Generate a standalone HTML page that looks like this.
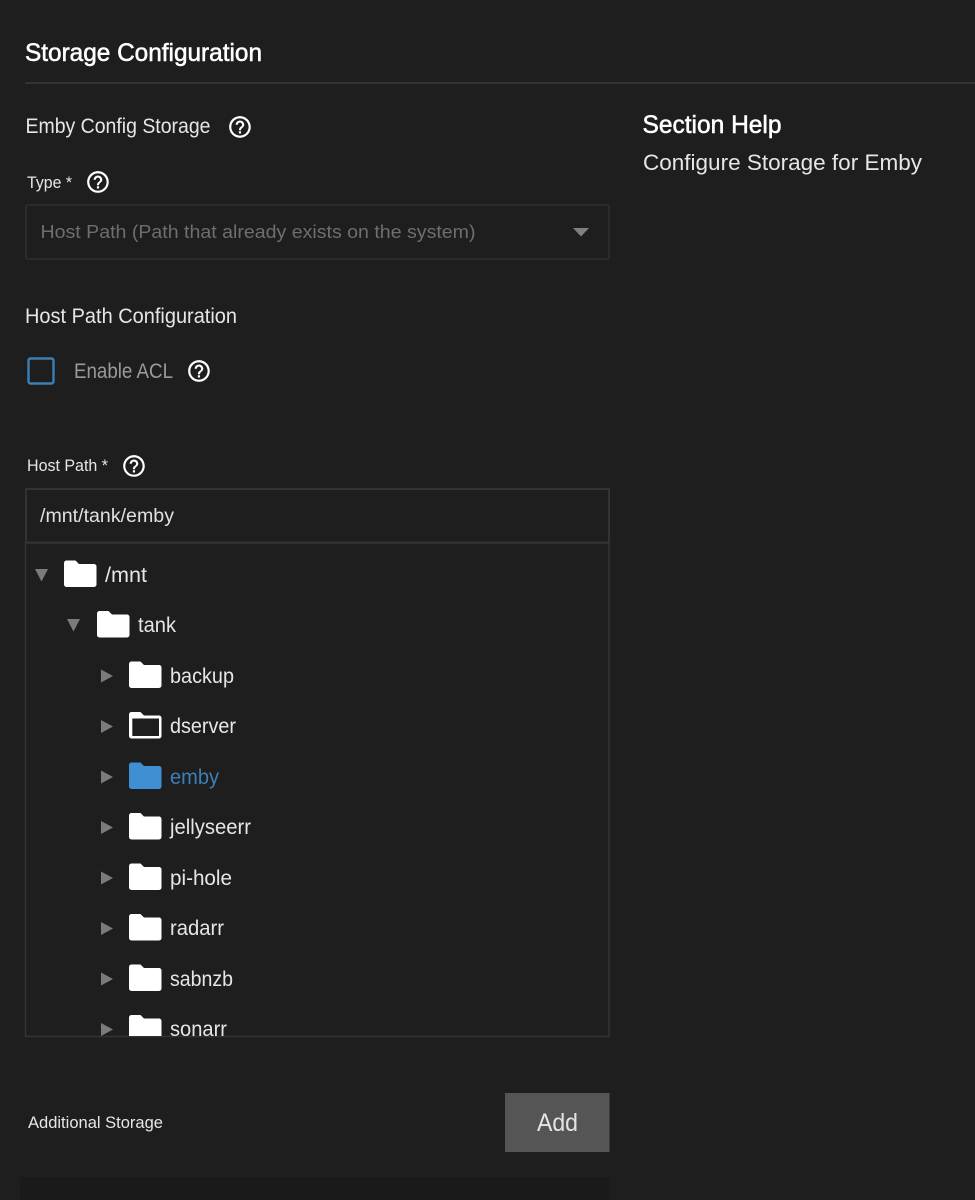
<!DOCTYPE html>
<html lang="en">
<head>
<meta charset="utf-8">
<title>Storage Configuration</title>
<style>
html,body{margin:0;padding:0;background:#1e1e1e;width:975px;height:1200px;overflow:hidden}
svg{display:block}
text{font-family:"Liberation Sans",sans-serif;fill:#e6e6e6}
.med{stroke:#fff;stroke-width:.55;fill:#fff}
.t{font-size:21px}
.arrow{fill:#7b7b7b}
</style>
</head>
<body>
<svg width="975" height="1200" viewBox="0 0 975 1200" xmlns="http://www.w3.org/2000/svg">
<defs>
<clipPath id="treeclip"><rect x="26" y="544" width="582" height="492"/></clipPath>
<path id="help" fill="#fff" d="M11 18h2v-2h-2v2zm1-16C6.48 2 2 6.48 2 12s4.48 10 10 10 10-4.48 10-10S17.52 2 12 2zm0 18c-4.41 0-8-3.59-8-8s3.59-8 8-8 8 3.59 8 8-3.59 8-8 8zm0-14c-2.21 0-4 1.79-4 4h2c0-1.1.9-2 2-2s2 .9 2 2c0 2-3 1.75-3 5h2c0-2.25 3-2.5 3-5 0-2.21-1.79-4-4-4z"/>
</defs>
<rect width="975" height="1200" fill="#1e1e1e"/>

<text class="med" x="25" y="61" font-size="25" textLength="237" lengthAdjust="spacingAndGlyphs">Storage Configuration</text>
<rect x="25" y="82" width="950" height="2" fill="#333"/>

<text class="t" x="25.5" y="133" textLength="185" lengthAdjust="spacingAndGlyphs">Emby Config Storage</text>
<use href="#help" transform="translate(227 114) scale(1.08)"/>

<text x="27" y="188" font-size="17" textLength="45" lengthAdjust="spacingAndGlyphs">Type *</text>
<use href="#help" transform="translate(85 169) scale(1.08)"/>

<rect x="26" y="205" width="583" height="54" rx="2" fill="none" stroke="#2c2c2c" stroke-width="2"/>
<text x="40.5" y="238" font-size="18.8" style="fill:#6e6e6e" textLength="435" lengthAdjust="spacingAndGlyphs">Host Path (Path that already exists on the system)</text>
<path d="M573 228h16l-8 8.5z" fill="#808080"/>

<text class="t" x="25" y="323" textLength="212" lengthAdjust="spacingAndGlyphs">Host Path Configuration</text>

<rect x="28.5" y="358.5" width="25" height="25" rx="2" fill="none" stroke="#3b7fb5" stroke-width="2.4"/>
<text class="t" x="74" y="378" style="fill:#9a9a9a" textLength="99" lengthAdjust="spacingAndGlyphs">Enable ACL</text>
<use href="#help" transform="translate(186 358) scale(1.08)"/>

<text x="27" y="471" font-size="17" textLength="81" lengthAdjust="spacingAndGlyphs">Host Path *</text>
<use href="#help" transform="translate(121 453) scale(1.08)"/>

<rect x="26" y="489" width="583" height="53.5" fill="none" stroke="#333" stroke-width="2"/>
<text x="40" y="522" font-size="19.5" style="fill:#e0e0e0" textLength="134" lengthAdjust="spacingAndGlyphs">/mnt/tank/emby</text>

<rect x="25.5" y="543" width="583.5" height="493.5" fill="none" stroke="#333" stroke-width="1.5"/>

<g clip-path="url(#treeclip)">
<path class="arrow" d="M35 569h13l-6.5 12.500z"/>
<path d="M64 563a2.500 2.500 0 0 1 2.500-2.500h9l3.500 3.500h15a2.500 2.500 0 0 1 2.500 2.500v18a2.500 2.500 0 0 1-2.500 2.500h-27.500a2.500 2.500 0 0 1-2.500-2.500z" fill="#fff"/>
<text class="t" x="105" y="582" textLength="42" lengthAdjust="spacingAndGlyphs">/mnt</text>

<path class="arrow" d="M67 619h13l-6.500 12.500z"/>
<path d="M97 613.500a2.500 2.500 0 0 1 2.500-2.500h9l3.500 3.500h15a2.500 2.500 0 0 1 2.500 2.500v18a2.500 2.500 0 0 1-2.500 2.500h-27.500a2.500 2.500 0 0 1-2.500-2.500z" fill="#fff"/>
<text class="t" x="138" y="632" textLength="38" lengthAdjust="spacingAndGlyphs">tank</text>

<path class="arrow" d="M101 669.500l12 6.500-12 6.500z"/>
<path d="M129 664a2.500 2.500 0 0 1 2.500-2.500h9l3.500 3.500h15a2.500 2.500 0 0 1 2.500 2.500v18a2.500 2.500 0 0 1-2.500 2.500h-27.500a2.500 2.500 0 0 1-2.500-2.500z" fill="#fff"/>
<text class="t" x="170" y="683" textLength="64" lengthAdjust="spacingAndGlyphs">backup</text>

<path class="arrow" d="M101 720l12 6.500-12 6.500z"/>
<path d="M129 714.500a2.500 2.500 0 0 1 2.500-2.500h9l3.500 3.500h15a2.500 2.500 0 0 1 2.500 2.500v18a2.500 2.500 0 0 1-2.500 2.500h-27.500a2.500 2.500 0 0 1-2.500-2.500zM132.300 718.500v17.500h26.700v-17.500z" fill="#fff" fill-rule="evenodd"/>
<text class="t" x="170" y="733" textLength="66" lengthAdjust="spacingAndGlyphs">dserver</text>

<path class="arrow" d="M101 770.500l12 6.500-12 6.500z"/>
<path d="M129 765a2.500 2.500 0 0 1 2.500-2.500h9l3.500 3.500h15a2.500 2.500 0 0 1 2.500 2.500v18a2.500 2.500 0 0 1-2.500 2.500h-27.500a2.500 2.500 0 0 1-2.500-2.500z" fill="#3e90d2"/>
<text class="t" x="170" y="784" style="fill:#3a80b8" textLength="49" lengthAdjust="spacingAndGlyphs">emby</text>

<path class="arrow" d="M101 821l12 6.500-12 6.500z"/>
<path d="M129 815.500a2.500 2.500 0 0 1 2.500-2.500h9l3.500 3.500h15a2.500 2.500 0 0 1 2.500 2.500v18a2.500 2.500 0 0 1-2.500 2.500h-27.500a2.500 2.500 0 0 1-2.500-2.500z" fill="#fff"/>
<text class="t" x="170" y="834" textLength="81" lengthAdjust="spacingAndGlyphs">jellyseerr</text>

<path class="arrow" d="M101 871.500l12 6.500-12 6.500z"/>
<path d="M129 866a2.500 2.500 0 0 1 2.500-2.500h9l3.500 3.500h15a2.500 2.500 0 0 1 2.500 2.500v18a2.500 2.500 0 0 1-2.500 2.500h-27.500a2.500 2.500 0 0 1-2.500-2.500z" fill="#fff"/>
<text class="t" x="170" y="885" textLength="62" lengthAdjust="spacingAndGlyphs">pi-hole</text>

<path class="arrow" d="M101 922l12 6.500-12 6.500z"/>
<path d="M129 916.500a2.500 2.500 0 0 1 2.500-2.500h9l3.500 3.500h15a2.500 2.500 0 0 1 2.500 2.500v18a2.500 2.500 0 0 1-2.500 2.500h-27.500a2.500 2.500 0 0 1-2.500-2.500z" fill="#fff"/>
<text class="t" x="170" y="935" textLength="54" lengthAdjust="spacingAndGlyphs">radarr</text>

<path class="arrow" d="M101 972.500l12 6.500-12 6.500z"/>
<path d="M129 967a2.500 2.500 0 0 1 2.500-2.500h9l3.500 3.500h15a2.500 2.500 0 0 1 2.500 2.500v18a2.500 2.500 0 0 1-2.500 2.500h-27.500a2.500 2.500 0 0 1-2.500-2.500z" fill="#fff"/>
<text class="t" x="170" y="986" textLength="63" lengthAdjust="spacingAndGlyphs">sabnzb</text>

<path class="arrow" d="M101 1023l12 6.500-12 6.500z"/>
<path d="M129 1017.500a2.500 2.500 0 0 1 2.500-2.500h9l3.500 3.500h15a2.500 2.500 0 0 1 2.500 2.500v18a2.500 2.500 0 0 1-2.500 2.500h-27.500a2.500 2.500 0 0 1-2.500-2.500z" fill="#fff"/>
<text class="t" x="170" y="1036" textLength="57" lengthAdjust="spacingAndGlyphs">sonarr</text>
</g>

<text x="28" y="1128" font-size="17" textLength="135" lengthAdjust="spacingAndGlyphs">Additional Storage</text>
<rect x="505" y="1093" width="104.500" height="59" fill="#555"/>
<text x="537" y="1131" font-size="25" style="fill:#e4e4e4" textLength="41" lengthAdjust="spacingAndGlyphs">Add</text>
<rect x="20" y="1177" width="589.500" height="23" fill="#1a1a1a"/>

<text class="med" x="642.500" y="133" font-size="25" textLength="139" lengthAdjust="spacingAndGlyphs">Section Help</text>
<text x="643" y="170" font-size="22" textLength="279" lengthAdjust="spacingAndGlyphs">Configure Storage for Emby</text>
</svg>
</body>
</html>
